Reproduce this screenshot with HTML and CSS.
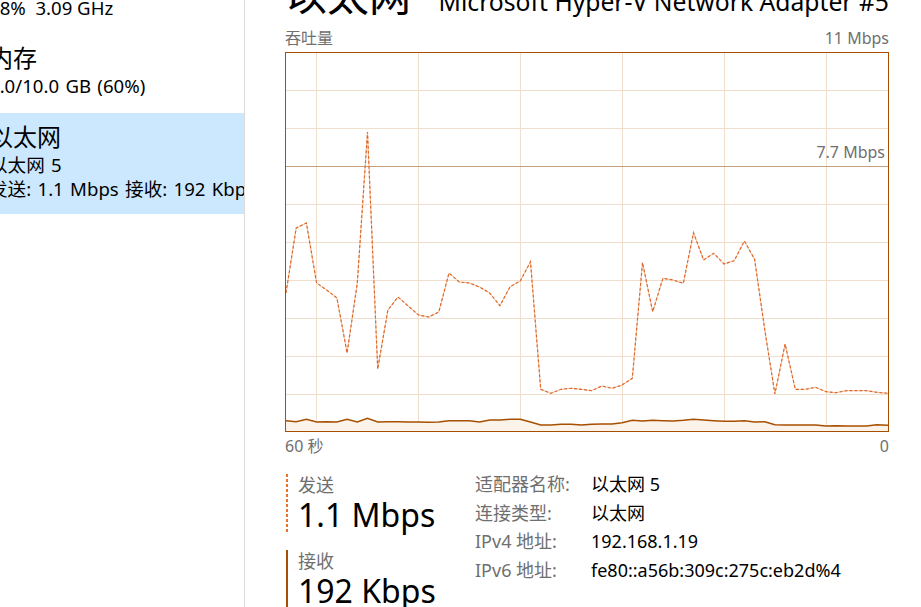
FILE: index.html
```html
<!DOCTYPE html>
<html lang="zh-CN">
<head>
<meta charset="utf-8">
<title>以太网</title>
<link rel="stylesheet" href="styles.css">
</head>
<body>
<div class="app">
  <aside class="sidebar">
    <div class="sidebar-inner">
      <div class="cpu-line">18%&nbsp; 3.09 GHz</div>
      <div class="item item-mem">
        <div class="item-title">内存</div>
        <div class="item-sub">6.0/10.0 GB (60%)</div>
      </div>
      <div class="item item-eth selected">
        <div class="item-title">以太网</div>
        <div class="item-sub">以太网 5</div>
        <div class="item-sub">发送: 1.1 Mbps 接收: 192 Kbps</div>
      </div>
    </div>
  </aside>
  <main class="main">
    <header class="header">
      <div class="title">以太网</div>
      <div class="device">Microsoft Hyper-V Network Adapter #5</div>
    </header>
    <div class="axis-row axis-top">
      <span>吞吐量</span>
      <span>11 Mbps</span>
    </div>
    <div class="chart">
      <svg class="chart-svg" width="602" height="378" viewBox="0 0 602 378">
        <g class="grid">
          <line x1="30.5" y1="0" x2="30.5" y2="378"/>
          <line x1="132.5" y1="0" x2="132.5" y2="378"/>
          <line x1="234.5" y1="0" x2="234.5" y2="378"/>
          <line x1="336.5" y1="0" x2="336.5" y2="378"/>
          <line x1="438.5" y1="0" x2="438.5" y2="378"/>
          <line x1="540.5" y1="0" x2="540.5" y2="378"/>
          <line x1="0" y1="37.5" x2="602" y2="37.5"/>
          <line x1="0" y1="75.5" x2="602" y2="75.5"/>
          <line x1="0" y1="151.5" x2="602" y2="151.5"/>
          <line x1="0" y1="189.5" x2="602" y2="189.5"/>
          <line x1="0" y1="227.5" x2="602" y2="227.5"/>
          <line x1="0" y1="265.5" x2="602" y2="265.5"/>
          <line x1="0" y1="303.5" x2="602" y2="303.5"/>
          <line x1="0" y1="341.5" x2="602" y2="341.5"/>
        </g>
        <line class="scale-line" x1="0" y1="113.5" x2="602" y2="113.5"/>
        <polygon class="recv-fill" points="0,367.7 10.2,368.7 20.4,366.3 30.6,369 40.7,368.7 50.9,369 61.1,366.3 71.3,369 81.5,365.3 91.7,369 101.9,368.7 112,368.7 122.2,369 132.4,369 142.6,369.3 152.8,369 163,367.7 173.2,367.7 183.4,367.7 193.5,369 203.7,367 213.9,367 224.1,366.3 234.3,366.3 244.5,369 254.7,372 264.8,372 275,371.3 285.2,371.3 295.4,372 305.6,371.3 315.8,371 326,371 336.1,369.7 346.3,367.3 356.5,368 366.7,367.3 376.9,367.7 387.1,368 397.3,367.3 407.5,366.3 417.6,367 427.8,367.7 438,368.3 448.2,368.3 458.4,367.7 468.6,369 478.8,368.7 488.9,371.7 499.1,372 509.3,372 519.5,372 529.7,372 539.9,373 550.1,372.7 560.2,373 570.4,373 580.6,373 590.8,371.7 602,372.3 602,378 0,378"/>
        <polyline class="recv-line" points="0,367.7 10.2,368.7 20.4,366.3 30.6,369 40.7,368.7 50.9,369 61.1,366.3 71.3,369 81.5,365.3 91.7,369 101.9,368.7 112,368.7 122.2,369 132.4,369 142.6,369.3 152.8,369 163,367.7 173.2,367.7 183.4,367.7 193.5,369 203.7,367 213.9,367 224.1,366.3 234.3,366.3 244.5,369 254.7,372 264.8,372 275,371.3 285.2,371.3 295.4,372 305.6,371.3 315.8,371 326,371 336.1,369.7 346.3,367.3 356.5,368 366.7,367.3 376.9,367.7 387.1,368 397.3,367.3 407.5,366.3 417.6,367 427.8,367.7 438,368.3 448.2,368.3 458.4,367.7 468.6,369 478.8,368.7 488.9,371.7 499.1,372 509.3,372 519.5,372 529.7,372 539.9,373 550.1,372.7 560.2,373 570.4,373 580.6,373 590.8,371.7 602,372.3"/>
        <polyline class="send-under" points="0,240 10.2,175 20.4,170 30.6,230 40.7,237 50.9,245 61.1,300 71.3,230 81.5,79 91.7,316 101.9,257 112,244 122.2,253 132.4,262 142.6,264 152.8,259 163,220 173.2,229 183.4,230 193.5,234 203.7,240 213.9,252.7 224.1,233.7 234.3,228 244.5,208.7 254.7,336.3 264.8,340.3 275,336.3 285.2,335.3 295.4,336.3 305.6,337.7 315.8,333 326,335.3 336.1,332 346.3,325.3 356.5,209.7 366.7,258.7 376.9,225.3 387.1,227 397.3,230.3 407.5,179.7 417.6,207 427.8,200.3 438,211 448.2,207.7 458.4,188 468.6,206.3 478.8,277 488.9,341 499.1,291 509.3,336.3 519.5,336.3 529.7,334.3 539.9,338.7 550.1,339.7 560.2,337.7 570.4,337.7 580.6,337.7 590.8,339.3 602,340.3"/>
        <polyline class="send-line" points="0,240 10.2,175 20.4,170 30.6,230 40.7,237 50.9,245 61.1,300 71.3,230 81.5,79 91.7,316 101.9,257 112,244 122.2,253 132.4,262 142.6,264 152.8,259 163,220 173.2,229 183.4,230 193.5,234 203.7,240 213.9,252.7 224.1,233.7 234.3,228 244.5,208.7 254.7,336.3 264.8,340.3 275,336.3 285.2,335.3 295.4,336.3 305.6,337.7 315.8,333 326,335.3 336.1,332 346.3,325.3 356.5,209.7 366.7,258.7 376.9,225.3 387.1,227 397.3,230.3 407.5,179.7 417.6,207 427.8,200.3 438,211 448.2,207.7 458.4,188 468.6,206.3 478.8,277 488.9,341 499.1,291 509.3,336.3 519.5,336.3 529.7,334.3 539.9,338.7 550.1,339.7 560.2,337.7 570.4,337.7 580.6,337.7 590.8,339.3 602,340.3"/>
      </svg>
      <div class="scale-label">7.7 Mbps</div>
    </div>
    <div class="axis-row axis-bottom">
      <span>60 秒</span>
      <span>0</span>
    </div>
    <section class="stats">
      <div class="stat-col">
        <div class="stat stat-send">
          <div class="stat-label">发送</div>
          <div class="stat-value">1.1 Mbps</div>
        </div>
        <div class="stat stat-recv">
          <div class="stat-label">接收</div>
          <div class="stat-value">192 Kbps</div>
        </div>
      </div>
      <div class="info">
        <div class="info-key">适配器名称:</div><div class="info-val">以太网 5</div>
        <div class="info-key">连接类型:</div><div class="info-val">以太网</div>
        <div class="info-key">IPv4 地址:</div><div class="info-val">192.168.1.19</div>
        <div class="info-key">IPv6 地址:</div><div class="info-val">fe80::a56b:309c:275c:eb2d%4</div>
      </div>
    </section>
  </main>
</div>
</body>
</html>
```
FILE: styles.css
```css
* { box-sizing: border-box; }
html, body {
  margin: 0;
  padding: 0;
  width: 921px;
  height: 607px;
  overflow: hidden;
  background: #ffffff;
}
body {
  font-family: "Noto Sans", "Noto Sans CJK SC", sans-serif;
  color: #000;
}
.app {
  display: flex;
  width: 921px;
  height: 607px;
  overflow: hidden;
}
.sidebar {
  width: 245px;
  flex-shrink: 0;
  border-right: 1px solid #dadada;
  overflow: hidden;
  white-space: nowrap;
}
.sidebar-inner {
  margin-left: -11px;
}
.cpu-line {
  font-size: 18.6px;
  line-height: 24px;
  height: 24px;
  margin-top: -4px;
}
.item {
  display: flex;
  flex-direction: column;
}
.item-mem {
  padding-top: 22px;
  padding-bottom: 15px;
}
.item-eth {
  padding-top: 8px;
  padding-bottom: 13px;
}
.selected {
  background: #cce8ff;
  margin-left: 11px;
}
.selected .item-title,
.selected .item-sub {
  margin-left: -11px;
}
.item-title {
  font-size: 24px;
  line-height: 32px;
  height: 32px;
}
.item-sub {
  font-size: 18.6px;
  line-height: 24px;
  height: 24px;
  word-spacing: 1.5px;
}
.main {
  flex: 1;
  padding-left: 40px;
  padding-right: 32px;
  display: flex;
  flex-direction: column;
  min-width: 0;
}
.header {
  display: flex;
  justify-content: space-between;
  align-items: baseline;
  margin-top: -25px;
  height: 40px;
  white-space: nowrap;
}
.title {
  font-size: 42px;
  line-height: 40px;
  height: 40px;
}
.device {
  font-size: 24.7px;
  line-height: 40px;
}
.axis-row {
  display: flex;
  justify-content: space-between;
  font-size: 16px;
  line-height: 20px;
  height: 20px;
  color: #6f6f6f;
}
.axis-top {
  margin-top: 13px;
}
.chart {
  position: relative;
  margin-top: 4px;
  width: 604px;
  height: 380px;
  border: 1px solid #a74f01;
}
.chart-svg {
  display: block;
}
.grid line {
  stroke: #f1dfcd;
  stroke-width: 1;
}
.scale-line {
  stroke: #c4a080;
  stroke-width: 1;
}
.recv-fill {
  fill: #fcf3ea;
}
.recv-line {
  fill: none;
  stroke: #a74f01;
  stroke-width: 1.5;
}
.send-under {
  fill: none;
  stroke: #f3c6a6;
  stroke-width: 1;
}
.send-line {
  fill: none;
  stroke: #e0672a;
  stroke-width: 1.2;
  stroke-dasharray: 3 2;
}
.scale-label {
  position: absolute;
  right: 3px;
  top: 89px;
  font-size: 16px;
  line-height: 20px;
  color: #6f6f6f;
}
.axis-bottom {
  margin-top: 4px;
}
.stats {
  display: flex;
  margin-top: 18px;
}
.stat-col {
  width: 190px;
  flex-shrink: 0;
  padding-left: 1px;
}
.stat {
  padding-left: 10px;
}
.stat-send {
  border-left: 2px solid transparent;
  background-image: linear-gradient(to bottom, #e8732f 0, #e8732f 3px, transparent 3px, transparent 5px);
  background-size: 2px 5px;
  background-repeat: repeat-y;
  background-position: 0 0;
  background-origin: border-box;
  background-clip: border-box;
}
.stat-recv {
  margin-top: 16px;
  border-left: 2px solid #a74f01;
}
.stat-label {
  font-size: 18px;
  line-height: 22px;
  height: 22px;
  color: #6f6f6f;
}
.stat-value {
  font-size: 32px;
  line-height: 38px;
  height: 38px;
  white-space: nowrap;
}
.info {
  display: grid;
  grid-template-columns: 116px auto;
  grid-auto-rows: 28.7px;
  margin-top: -4px;
  font-size: 18px;
  line-height: 28.7px;
  white-space: nowrap;
}
.info-key {
  color: #6f6f6f;
}
.info-val {
  color: #000;
}
```
